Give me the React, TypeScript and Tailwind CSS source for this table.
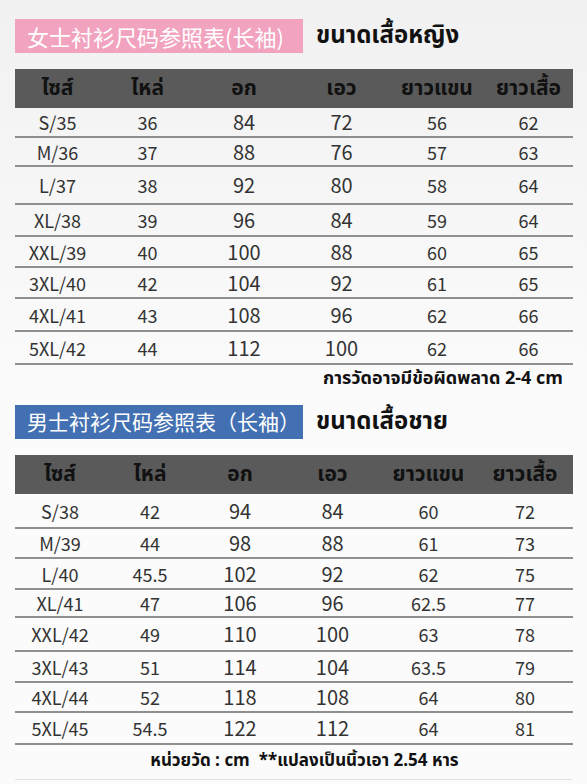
import React from "react";

const thai = "font-['Noto_Sans_Thai','Noto_Sans','Liberation_Sans',sans-serif]";
const cjk = "font-['Noto_Sans_CJK_SC','Noto_Sans',sans-serif]";

const headers = ["ไซส์", "ไหล่", "อก", "เอว", "ยาวแขน", "ยาวเสื้อ"];

const women = [
  ["S/35", "36", "84", "72", "56", "62"],
  ["M/36", "37", "88", "76", "57", "63"],
  ["L/37", "38", "92", "80", "58", "64"],
  ["XL/38", "39", "96", "84", "59", "64"],
  ["XXL/39", "40", "100", "88", "60", "65"],
  ["3XL/40", "42", "104", "92", "61", "65"],
  ["4XL/41", "43", "108", "96", "62", "66"],
  ["5XL/42", "44", "112", "100", "62", "66"],
];

const men = [
  ["S/38", "42", "94", "84", "60", "72"],
  ["M/39", "44", "98", "88", "61", "73"],
  ["L/40", "45.5", "102", "92", "62", "75"],
  ["XL/41", "47", "106", "96", "62.5", "77"],
  ["XXL/42", "49", "110", "100", "63", "78"],
  ["3XL/43", "51", "114", "104", "63.5", "79"],
  ["4XL/44", "52", "118", "108", "64", "80"],
  ["5XL/45", "54.5", "122", "112", "64", "81"],
];

interface SizeTableProps {
  widths: string[];
  heights: string[];
  rows: string[][];
}

function SizeTable({ widths, heights, rows }: SizeTableProps) {
  return (
    <div className="mx-[15px] w-[558px]">
      <div className={`flex h-[39px] items-center bg-[#5a5a5a] text-[21px] font-bold text-[#111] ${thai}`}>
        {headers.map((h, i) => (
          <div key={h} className={`${widths[i]} text-center`}>
            {h}
          </div>
        ))}
      </div>
      {rows.map((row, r) => (
        <div
          key={row[0]}
          className={`flex items-center border-b-2 border-[#8f8f8f] text-[#333] ${cjk} ${heights[r]}`}
        >
          {row.map((cell, i) => (
            <div
              key={i}
              className={`${widths[i]} text-center leading-none ${i === 2 || i === 3 ? "text-[20px]" : "text-[18px]"}`}
            >
              {cell}
            </div>
          ))}
        </div>
      ))}
    </div>
  );
}

function Title({ zh, th, tone }: { zh: string; th: string; tone: string }) {
  return (
    <div className="flex items-center px-[15px]">
      <div
        className={`flex h-[34px] w-[288px] items-center overflow-hidden whitespace-nowrap pl-[12px] text-white ${tone} ${cjk}`}
      >
        {zh}
      </div>
      <div className={`ml-[13px] text-[24px] font-bold text-[#111] ${thai}`}>{th}</div>
    </div>
  );
}

export default function App() {
  return (
    <div className="h-[784px] w-[587px] overflow-hidden bg-gradient-to-b from-[#f1f1f1] via-[#fbfbfb] to-[#fbfbfb] pt-[18px]">
      <Title zh="女士衬衫尺码参照表(长袖)" th="ขนาดเสื้อหญิง" tone="bg-[#f2a3bf] text-[22px]" />
      <div className="mt-[15px]">
        <SizeTable
          widths={["w-[85px]", "w-[95px]", "w-[98px]", "w-[97px]", "w-[94px]", "w-[89px]"]}
          heights={["h-[30px]", "h-[29px]", "h-[38px]", "h-[32px]", "h-[31px]", "h-[31px]", "h-[33px]", "h-[33px]"]}
          rows={women}
        />
      </div>
      <div className={`mt-[3px] h-[22px] pr-[24px] text-right text-[18px] font-bold leading-[22px] text-[#111] ${thai}`}>
        การวัดอาจมีข้อผิดพลาด 2-4 cm
      </div>
      <div className="mt-[14px]">
        <Title zh="男士衬衫尺码参照表（长袖）" th="ขนาดเสื้อชาย" tone="bg-[#4270b3] text-[21px]" />
      </div>
      <div className="mt-[15px]">
        <SizeTable
          widths={["w-[90px]", "w-[90px]", "w-[90px]", "w-[95px]", "w-[97px]", "w-[96px]"]}
          heights={["h-[35px]", "h-[30px]", "h-[31px]", "h-[28px]", "h-[34px]", "h-[31px]", "h-[30px]", "h-[32px]"]}
          rows={men}
        />
      </div>
      <div className={`mt-[4px] h-[24px] pl-[22px] text-center text-[17px] font-bold leading-[24px] text-[#111] ${thai}`}>
        หน่วยวัด : cm&nbsp;&nbsp;**แปลงเป็นนิ้วเอา 2.54 หาร
      </div>
      <div className="mx-[15px] mt-[6px] border-t border-[#e2e2e2]" />
    </div>
  );
}
